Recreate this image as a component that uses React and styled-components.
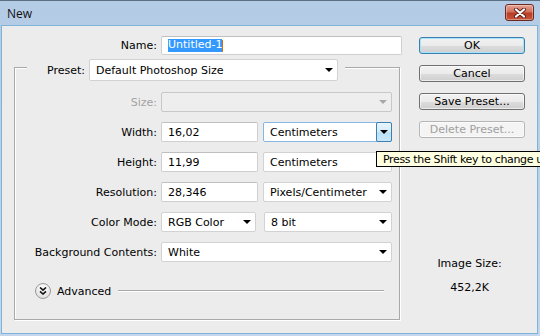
import React from 'react'
import styled, { createGlobalStyle } from 'styled-components'

const UI = `"DejaVu Sans", "Noto Sans", sans-serif`

const GlobalStyle = createGlobalStyle`
  * { box-sizing: border-box; }
  body {
    margin: 0;
    background: #ececec;
    font-family: ${UI};
    font-size: 11px;
    color: #000;
  }
`

export default function App() {
  return (
    <>
      <GlobalStyle />
      <Window>
        <TitleBar>
          <Title>New</Title>
          <CloseButton>
            <svg width="14" height="10" viewBox="0 0 14 10">
              <path d="M3 1.5 L11 8.5 M11 1.5 L3 8.5" stroke="#5a2018" strokeWidth="4" strokeLinecap="round" />
              <path d="M3 1.5 L11 8.5 M11 1.5 L3 8.5" stroke="#fff" strokeWidth="2.2" strokeLinecap="round" />
            </svg>
          </CloseButton>
        </TitleBar>

        <Body>
          <Main>
            <Row>
              <Label $w={143}>Name:</Label>
              <Box $w={241} $h={19}>
                <Selected>Untitled-1</Selected>
                <Caret />
              </Box>
            </Row>

            <Group>
              <Legend>
                <Label $w={58}>Preset:</Label>
                <Combo $w={249} $h={22} text="Default Photoshop Size" />
              </Legend>

              <Row $mt={11}>
                <Label $w={142} $disabled>Size:</Label>
                <Combo $w={231} $disabled text="" />
              </Row>
              <Row $mt={10}>
                <Label $w={142}>Width:</Label>
                <Fields>
                  <Box $w={97}>16,02</Box>
                  <Combo $w={129} $hover text="Centimeters" />
                </Fields>
              </Row>
              <Row $mt={10}>
                <Label $w={142}>Height:</Label>
                <Fields>
                  <Box $w={97}>11,99</Box>
                  <Combo $w={129} text="Centimeters" />
                </Fields>
              </Row>
              <Row $mt={10}>
                <Label $w={142}>Resolution:</Label>
                <Fields>
                  <Box $w={97}>28,346</Box>
                  <Combo $w={129} text="Pixels/Centimeter" />
                </Fields>
              </Row>
              <Row $mt={10}>
                <Label $w={142}>Color Mode:</Label>
                <Fields $gap={8}>
                  <Combo $w={95} text="RGB Color" />
                  <Combo $w={128} text="8 bit" />
                </Fields>
              </Row>
              <Row $mt={10}>
                <Label $w={142}>Background Contents:</Label>
                <Combo $w={231} text="White" />
              </Row>

              <AdvancedRow>
                <Expander>
                  <svg width="8" height="8" viewBox="0 0 8 8">
                    <path d="M1 0.5 L4 3.2 L7 0.5 M1 4.3 L4 7 L7 4.3" fill="none" stroke="#111" strokeWidth="1.6" />
                  </svg>
                </Expander>
                <span>Advanced</span>
                <Rule />
              </AdvancedRow>
            </Group>
          </Main>

          <Side>
            <Button $default>OK</Button>
            <Button>Cancel</Button>
            <Button>Save Preset...</Button>
            <Button $disabled>Delete Preset...</Button>
            <Info>
              <span>Image Size:</span>
              <span>452,2K</span>
            </Info>
          </Side>
        </Body>

        <Tooltip>Press the Shift key to change units</Tooltip>
      </Window>
    </>
  )
}

const Combo = ({ text, $w, $h = 20, $disabled, $hover }) => (
  <ComboBox $w={$w} $h={$h} $disabled={$disabled} $hover={$hover}>
    <ComboText>{text}</ComboText>
    <ArrowButton $hover={$hover}>
      <Triangle $disabled={$disabled} />
    </ArrowButton>
  </ComboBox>
)

const Window = styled.div`
  position: relative;
  width: 540px;
  height: 336px;
  overflow: hidden;
  display: flex;
  flex-direction: column;
  background: linear-gradient(#b4cbe6, #c3d6ed);
  border-top: 1px solid #5d6f82;
`

const TitleBar = styled.div`
  height: 25px;
  flex-shrink: 0;
  display: flex;
  align-items: center;
  justify-content: space-between;
  padding: 0 6px 0 7px;
`

const Title = styled.span`
  font-family: "Open Sans", sans-serif;
  font-size: 12px;
  color: #111;
  margin-top: -1px;
`

const CloseButton = styled.div`
  width: 29px;
  height: 17px;
  margin-top: -2px;
  display: flex;
  align-items: center;
  justify-content: center;
  border: 1px solid #6a2a20;
  border-radius: 3px;
  background: linear-gradient(#e4a495, #d3705c 45%, #b83d26 55%, #c9553c);
  box-shadow: inset 0 0 0 1px rgba(255, 255, 255, 0.35);
`

const Body = styled.div`
  flex: 1;
  display: flex;
  background: #ececec;
  margin: 0 3px 3px 2px;
  box-shadow: 0 0 0 1px #7fb4d8;
`

const Main = styled.div`
  width: 402px;
  padding: 10px 0 0 12px;
  flex-shrink: 0;
`

const Row = styled.div`
  display: flex;
  align-items: center;
  gap: 4px;
  margin-top: ${p => p.$mt || 0}px;
`

const Fields = styled.div`
  display: flex;
  gap: ${p => p.$gap || 5}px;
`

const Label = styled.span`
  width: ${p => p.$w}px;
  flex-shrink: 0;
  text-align: right;
  white-space: nowrap;
  color: ${p => (p.$disabled ? '#a3a3a3' : '#000')};
`

const Box = styled.div`
  width: ${p => p.$w}px;
  height: ${p => p.$h || 20}px;
  flex-shrink: 0;
  display: flex;
  align-items: center;
  padding-left: 6px;
  background: #fff;
  border: 1px solid #cfcfcf;
  border-top-color: #bfbfbf;
  border-radius: 2px;
  white-space: nowrap;
`

const Selected = styled.span`
  background: #3399ff;
  color: #fff;
  padding: 0 0 1px 0;
  line-height: 12px;
`

const Caret = styled.span`
  width: 1px;
  height: 12px;
  background: #d36a10;
`

const ComboBox = styled.div`
  width: ${p => p.$w}px;
  height: ${p => p.$h}px;
  flex-shrink: 0;
  display: flex;
  align-items: center;
  background: ${p => (p.$disabled ? '#eeeeee' : '#fff')};
  border: 1px solid ${p => (p.$hover ? '#86b6e2' : p.$disabled ? '#c8c8c8' : '#d2d2d2')};
  border-radius: 2px;
`

const ComboText = styled.span`
  flex: 1;
  padding-left: 6px;
  white-space: nowrap;
  overflow: hidden;
`

const ArrowButton = styled.span`
  width: 15px;
  align-self: stretch;
  display: flex;
  align-items: center;
  justify-content: center;
  margin: ${p => (p.$hover ? '-1px -1px -1px 0' : '0 1px 0 0')};
  ${p =>
    p.$hover &&
    `
    width: 16px;
    background: linear-gradient(#eaf5fd, #d2ebfa 50%, #b9e0f8 51%, #c9e8fa);
    border: 1px solid #3c7fb1;
    border-radius: 2px;
  `}
`

const Triangle = styled.span`
  width: 0;
  height: 0;
  border-left: 4px solid transparent;
  border-right: 4px solid transparent;
  border-top: 4px solid ${p => (p.$disabled ? '#a8a8a8' : '#000')};
`

const Group = styled.div`
  margin-top: 12px;
  width: 386px;
  height: 253px;
  border: 1px solid #a9a9a9;
  box-shadow: 1px 1px 0 #fff, inset 1px 1px 0 #fff;
`

const Legend = styled.div`
  display: flex;
  width: fit-content;
  align-items: center;
  gap: 4px;
  margin: -9px 0 0 12px;
  padding-right: 7px;
  background: #ececec;
`

const AdvancedRow = styled.div`
  display: flex;
  align-items: center;
  gap: 6px;
  margin: 21px 15px 0 20px;
`

const Expander = styled.span`
  width: 16px;
  height: 16px;
  border-radius: 50%;
  border: 1px solid #9a9a9a;
  background: radial-gradient(circle at 50% 30%, #ffffff, #e4e4e4 70%, #cfcfcf);
  display: flex;
  align-items: center;
  justify-content: center;
`

const Rule = styled.span`
  flex: 1;
  height: 2px;
  border-top: 1px solid #a9a9a9;
  border-bottom: 1px solid #fff;
  margin-left: 1px;
`

const Side = styled.div`
  width: 106px;
  margin-left: 15px;
  padding-top: 11px;
  display: flex;
  flex-direction: column;
  gap: 11px;
`

const Button = styled.div`
  height: 17px;
  display: flex;
  align-items: center;
  justify-content: center;
  border: 1px solid ${p => (p.$default ? '#3c7fb1' : p.$disabled ? '#b5b5b5' : '#707070')};
  border-radius: 3px;
  color: ${p => (p.$disabled ? '#a0a0a0' : '#000')};
  background: ${p =>
    p.$disabled
      ? '#f4f4f4'
      : 'linear-gradient(#f2f2f2, #ebebeb 50%, #dddddd 51%, #cfcfcf)'};
  box-shadow: inset 0 0 0 1px ${p => (p.$default ? '#a9e2fb' : 'rgba(255,255,255,0.6)')};
`

const Info = styled.div`
  margin-top: 108px;
  display: flex;
  flex-direction: column;
  align-items: center;
  gap: 10px;
  padding-right: 5px;
  line-height: 14px;
`

const Tooltip = styled.div`
  position: absolute;
  left: 376px;
  top: 150px;
  height: 16px;
  padding: 0 6px;
  display: flex;
  align-items: center;
  white-space: nowrap;
  letter-spacing: -0.35px;
  background: #ffffe1;
  border: 1px solid #000;
  color: #000;
`
